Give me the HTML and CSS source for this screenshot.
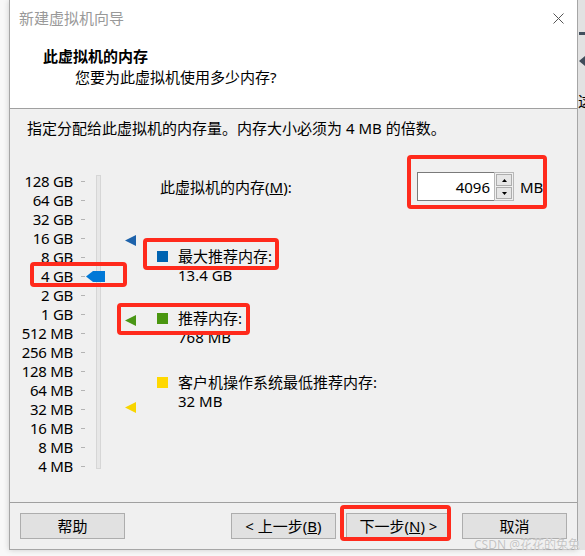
FILE: index.html
```html
<!DOCTYPE html>
<html lang="zh-CN">
<head>
  <meta charset="UTF-8" />
  <title>新建虚拟机向导</title>
  <link rel="stylesheet" href="styles.css">
</head>
<body>
  <div class="screen">
    <div class="window">
      <div class="titlebar">
        <span class="title">新建虚拟机向导</span>
        <svg class="close" width="11" height="11" viewBox="0 0 11 11">
          <path d="M0.5 0.5 L10.5 10.5 M10.5 0.5 L0.5 10.5" stroke="#555" stroke-width="1" fill="none" />
        </svg>
      </div>

      <div class="header">
        <h1>此虚拟机的内存</h1>
        <p>您要为此虚拟机使用多少内存?</p>
      </div>

      <div class="body">
        <p class="intro">指定分配给此虚拟机的内存量。内存大小必须为 4 MB 的倍数。</p>

        <div class="scale">
          <div class="levels">
            <div class="level"><span>128 GB</span><i></i></div>
            <div class="level"><span>64 GB</span><i></i></div>
            <div class="level"><span>32 GB</span><i></i></div>
            <div class="level"><span>16 GB</span><i></i></div>
            <div class="level"><span>8 GB</span><i></i></div>
            <div class="level"><span>4 GB</span><i></i></div>
            <div class="level"><span>2 GB</span><i></i></div>
            <div class="level"><span>1 GB</span><i></i></div>
            <div class="level"><span>512 MB</span><i></i></div>
            <div class="level"><span>256 MB</span><i></i></div>
            <div class="level"><span>128 MB</span><i></i></div>
            <div class="level"><span>64 MB</span><i></i></div>
            <div class="level"><span>32 MB</span><i></i></div>
            <div class="level"><span>16 MB</span><i></i></div>
            <div class="level"><span>8 MB</span><i></i></div>
            <div class="level"><span>4 MB</span><i></i></div>
          </div>
          <div class="track"></div>

          <!-- slider thumb and markers sit on the scale by value -->
          <svg class="thumb" style="top: 99px" width="19" height="11" viewBox="0 0 19 11">
            <polygon points="0,5.5 7,0 19,0 19,11 7,11" fill="#0078d7" />
          </svg>
          <svg class="marker" style="top: 63px" width="11" height="11" viewBox="0 0 11 11">
            <polygon points="0,5.5 11,0 11,11" fill="#1d62ab" />
          </svg>
          <svg class="marker" style="top: 143px" width="11" height="11" viewBox="0 0 11 11">
            <polygon points="0,5.5 11,0 11,11" fill="#4a9616" />
          </svg>
          <svg class="marker" style="top: 230px" width="11" height="11" viewBox="0 0 11 11">
            <polygon points="0,5.5 11,0 11,11" fill="#f8d500" />
          </svg>

          <div class="details">
            <div class="amount">
              <label for="mem">此虚拟机的内存(<u>M</u>):</label>
              <div class="field">
                <input id="mem" type="text" value="4096" />
                <div class="spin">
                  <button type="button"><svg width="5" height="3" viewBox="0 0 5 3"><polygon points="2.5,0 5,3 0,3" fill="#000"/></svg></button>
                  <button type="button"><svg width="5" height="3" viewBox="0 0 5 3"><polygon points="0,0 5,0 2.5,3" fill="#000"/></svg></button>
                </div>
              </div>
              <span class="unit">MB</span>
            </div>

            <div class="legend max">
              <span class="swatch blue"></span>
              <div>
                <div>最大推荐内存:</div>
                <div>13.4 GB</div>
              </div>
            </div>
            <div class="legend rec">
              <span class="swatch green"></span>
              <div>
                <div>推荐内存:</div>
                <div>768 MB</div>
              </div>
            </div>
            <div class="legend min">
              <span class="swatch yellow"></span>
              <div>
                <div>客户机操作系统最低推荐内存:</div>
                <div>32 MB</div>
              </div>
            </div>
          </div>
        </div>
      </div>

      <div class="footer">
        <button type="button" class="btn">帮助</button>
        <button type="button" class="btn back">&lt; 上一步(<u>B</u>)</button>
        <button type="button" class="btn next">下一步(<u>N</u>) &gt;</button>
        <button type="button" class="btn cancel">取消</button>
      </div>
    </div>

    <!-- desktop peeking out on the right -->
    <div class="desk-edge">
      <span class="bar"></span>
      <span class="arrow"></span>
      <span class="glyph">这</span>
    </div>

    <!-- red annotation boxes -->
    <div class="mark mark-input"></div>
    <div class="mark mark-max"></div>
    <div class="mark mark-thumb"></div>
    <div class="mark mark-rec"></div>
    <div class="mark mark-next"></div>

    <div class="watermark">CSDN @花花的兔兔</div>
  </div>
</body>
</html>
```

FILE: styles.css
```css
* {
  margin: 0;
  padding: 0;
  box-sizing: border-box;
}

body {
  background: #f8f8f8;
  font-family: "Noto Sans", "Noto Sans CJK SC", sans-serif;
  font-size: 15px;
  color: #000;
}

.screen {
  position: relative;
  width: 585px;
  height: 556px;
  overflow: hidden;
}

.window {
  margin-left: 9px;
  width: 569px;
  height: 550px;
  border: 1px solid #a6a6a6;
  border-top: none;
  background: #f0f0f0;
  box-shadow: 0 0 6px rgba(0, 0, 0, 0.18);
}

.titlebar {
  height: 36px;
  background: #fff;
  display: flex;
  justify-content: space-between;
  align-items: center;
  padding: 0 13px 0 9px;
}

.title {
  color: #999;
  line-height: 20px;
}

.close {
  display: block;
}

.header {
  height: 73px;
  background: #fff;
  border-bottom: 1px solid #a0a0a0;
  padding: 10px 0 0 33px;
}

.header h1 {
  font-size: 15px;
  font-weight: bold;
  line-height: 20px;
}

.header p {
  margin: 1px 0 0 32px;
  line-height: 20px;
}

.body {
  height: 394px;
  border-bottom: 1px solid #a0a0a0;
  padding: 9px 17px 0;
}

.intro {
  line-height: 20px;
}

.scale {
  position: relative;
  display: flex;
  align-items: flex-start;
  margin-top: 34px;
}

.levels {
  margin-left: -6px;
}

.level {
  display: flex;
  align-items: center;
  height: 19px;
}

.level span {
  width: 52px;
  text-align: right;
  line-height: 19px;
  letter-spacing: -0.3px;
  white-space: nowrap;
}

.level i {
  width: 4px;
  height: 1px;
  margin-left: 8px;
  background: #b4b4b4;
}

.track {
  width: 5px;
  height: 294px;
  margin: 3px 0 0 11px;
  background: #e7e7e7;
  border: 1px solid #d6d6d6;
}

.thumb {
  position: absolute;
  left: 59px;
  display: block;
}

.marker {
  position: absolute;
  left: 98px;
  display: block;
}

.details {
  margin-left: 56px;
}

.amount {
  display: flex;
  align-items: center;
  height: 29px;
}

.amount label {
  width: 260px;
  padding-left: 3px;
  line-height: 20px;
}

.field {
  display: flex;
  height: 29px;
  border: 1px solid #7a7a7a;
  background: #fff;
}

.field input {
  width: 76px;
  border: none;
  outline: none;
  text-align: right;
  padding-right: 4px;
  font: inherit;
  background: #fff;
}

.spin {
  display: flex;
  flex-direction: column;
  justify-content: center;
  gap: 1px;
  width: 20px;
  padding: 1px 1px;
  background: #f0f0f0;
  margin: -1px -1px -1px 0;
  border: 1px solid #b8b8b8;
}

.spin button {
  flex: 1;
  display: flex;
  align-items: center;
  justify-content: center;
  background: #e6e6e6;
  border: 1px solid #adadad;
}

.spin svg {
  display: block;
}

.unit {
  margin-left: 6px;
  line-height: 20px;
}

.legend {
  display: flex;
  line-height: 19px;
}

.legend.max {
  margin-top: 46px;
}

.legend.rec {
  margin-top: 24px;
}

.legend.min {
  margin-top: 26px;
}

.swatch {
  width: 11px;
  height: 11px;
  margin: 4px 10px 0 0;
  flex-shrink: 0;
}

.swatch.blue {
  background: #0063b1;
}

.swatch.green {
  background: #4a9610;
}

.swatch.yellow {
  background: #ffd800;
}

.footer {
  display: flex;
  padding: 10px 10px 0;
}

.btn {
  width: 105px;
  height: 26px;
  background: #e1e1e1;
  border: 1px solid #adadad;
  font: inherit;
  line-height: 22px;
  color: #000;
}

.back {
  margin-left: auto;
}

.next {
  margin-left: 10px;
}

.cancel {
  margin-left: 11px;
}

.desk-edge {
  position: absolute;
  left: 578px;
  top: 0;
  width: 7px;
  height: 550px;
  background: #e2e2e2;
}

.desk-edge .bar {
  position: absolute;
  top: 32px;
  left: 1px;
  width: 6px;
  height: 3px;
  background: #42505e;
}

.desk-edge .arrow {
  position: absolute;
  top: 56px;
  left: 1px;
  border-top: 5px solid transparent;
  border-bottom: 5px solid transparent;
  border-right: 6px solid #3f4c5a;
}

.desk-edge .glyph {
  position: absolute;
  top: 91px;
  left: 0;
  line-height: 20px;
}

.mark {
  position: absolute;
  border: 4px solid #ff2a1c;
  border-radius: 4px;
}

.mark-input {
  left: 407px;
  top: 155px;
  width: 140px;
  height: 54px;
}

.mark-max {
  left: 143px;
  top: 238px;
  width: 136px;
  height: 32px;
}

.mark-thumb {
  left: 30px;
  top: 262px;
  width: 97px;
  height: 25px;
}

.mark-rec {
  left: 117px;
  top: 303px;
  width: 133px;
  height: 32px;
}

.mark-next {
  left: 340px;
  top: 505px;
  width: 111px;
  height: 36px;
}

.watermark {
  position: absolute;
  right: 5px;
  bottom: 3px;
  font-size: 12px;
  color: #c4c4c4;
  text-shadow: 0 0 1px #fff;
}
```
